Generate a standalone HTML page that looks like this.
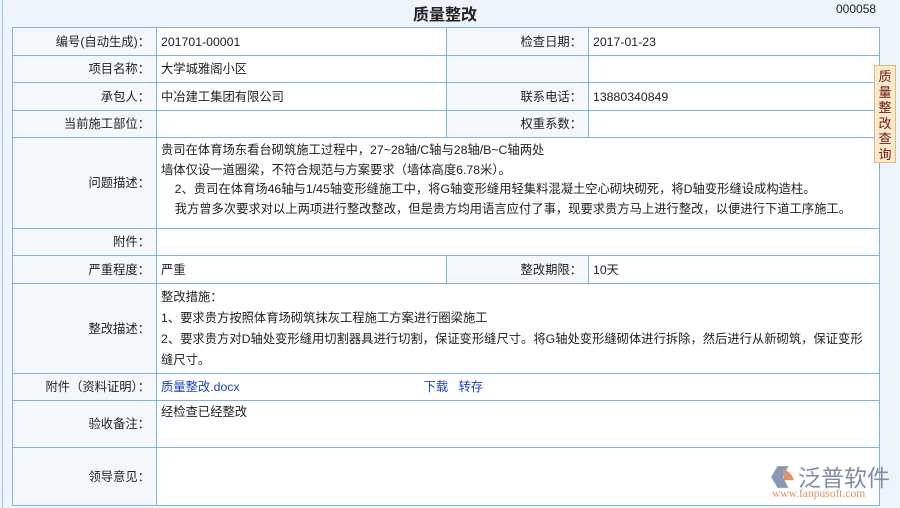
<!DOCTYPE html><html><head><meta charset="utf-8"><style>
body{margin:0;width:900px;height:508px;background:#eef4fc;font-family:"Liberation Sans","Noto Sans CJK SC",sans-serif;font-size:12.3px;color:#222;position:relative;overflow:hidden}
.lb{position:absolute;left:2px;top:0;width:1px;height:508px;background:#9cc2e6}
h1{position:absolute;left:0;width:890px;top:1px;margin:0;text-align:center;font-size:16px;font-weight:bold;color:#222}
.no{position:absolute;left:836px;top:2px;font-size:12px}
table{position:absolute;left:12px;top:27px;width:867px;border-collapse:collapse;table-layout:fixed}
td{border:1px solid #7fb2de;padding:0 4px;vertical-align:middle;line-height:22px;white-space:nowrap;overflow:hidden}
td.l{text-align:right;background:#f4f8fd;padding-right:6px}
td.v{background:#fff}
a{color:#1a3fc7;text-decoration:none}
.side{position:absolute;left:874px;top:65px;width:22px;height:98px;background:#fdeacb;border:1px solid #e3b783;color:#6a1818;font-size:13px;line-height:15.5px;text-align:center;padding-top:3px;box-sizing:border-box}
.logo{position:absolute;left:770px;top:462px}
</style></head><body>
<div class="lb"></div>
<h1>质量整改</h1><div class="no">000058</div>
<table>
<col style="width:144px"><col style="width:290px"><col style="width:142px"><col style="width:291px">
<tr style="height:28px"><td class="l">编号(自动生成)：</td><td class="v">201701-00001</td><td class="l">检查日期：</td><td class="v">2017-01-23</td></tr>
<tr style="height:27px"><td class="l">项目名称：</td><td class="v">大学城雅阁小区</td><td class="l"></td><td class="v"></td></tr>
<tr style="height:28px"><td class="l">承包人：</td><td class="v">中冶建工集团有限公司</td><td class="l">联系电话：</td><td class="v">13880340849</td></tr>
<tr style="height:27px"><td class="l">当前施工部位：</td><td class="v"></td><td class="l">权重系数：</td><td class="v"></td></tr>
<tr style="height:91px"><td class="l">问题描述：</td><td class="v" colspan="3" style="line-height:19.5px;vertical-align:top;padding-top:3px">贵司在体育场东看台砌筑施工过程中，27~28轴/C轴与28轴/B~C轴两处<br>墙体仅设一道圈梁，不符合规范与方案要求（墙体高度6.78米）。<br>&nbsp;&nbsp;&nbsp;&nbsp;2、贵司在体育场46轴与1/45轴变形缝施工中，将G轴变形缝用轻集料混凝土空心砌块砌死，将D轴变形缝设成构造柱。<br>&nbsp;&nbsp;&nbsp;&nbsp;我方曾多次要求对以上两项进行整改整改，但是贵方均用语言应付了事，现要求贵方马上进行整改，以便进行下道工序施工。</td></tr>
<tr style="height:27px"><td class="l">附件：</td><td class="v" colspan="3"></td></tr>
<tr style="height:28px"><td class="l">严重程度：</td><td class="v">严重</td><td class="l">整改期限：</td><td class="v">10天</td></tr>
<tr style="height:90px"><td class="l">整改描述：</td><td class="v" colspan="3" style="line-height:21px;vertical-align:top;padding-top:3px">整改措施：<br>1、要求贵方按照体育场砌筑抹灰工程施工方案进行圈梁施工<br>2、要求贵方对D轴处变形缝用切割器具进行切割，保证变形缝尺寸。将G轴处变形缝砌体进行拆除，然后进行从新砌筑，保证变形<br>缝尺寸。</td></tr>
<tr style="height:27px"><td class="l">附件（资料证明）：</td><td class="v" colspan="3"><a>质量整改.docx</a><span style="display:inline-block;width:184px"></span><a>下载</a>&nbsp;&nbsp;&nbsp;<a>转存</a></td></tr>
<tr style="height:47px"><td class="l">验收备注：</td><td class="v" colspan="3" style="vertical-align:top">经检查已经整改</td></tr>
<tr style="height:58px"><td class="l">领导意见：</td><td class="v" colspan="3"></td></tr>
</table>
<div class="side">质<br>量<br>整<br>改<br>查<br>询</div>
<div class="logo"><svg width="26" height="24" viewBox="0 0 24 22" style="position:absolute;left:0;top:3px"><path d="M7 1H17L12 11L17 21H7L1 11Z" fill="#8a98b4"/><path d="M12 4Q20 6 22 14L13 14Z" fill="#e0926a"/></svg>
<span style="position:absolute;left:28px;top:-3px;font-size:23px;color:#7f8ea8;white-space:nowrap">泛普软件</span>
<span style="position:absolute;left:2px;top:26px;font-size:11.5px;color:#e0926a;font-family:'Liberation Serif',serif;white-space:nowrap">www.fanpusoft.com</span></div>
</body></html>
